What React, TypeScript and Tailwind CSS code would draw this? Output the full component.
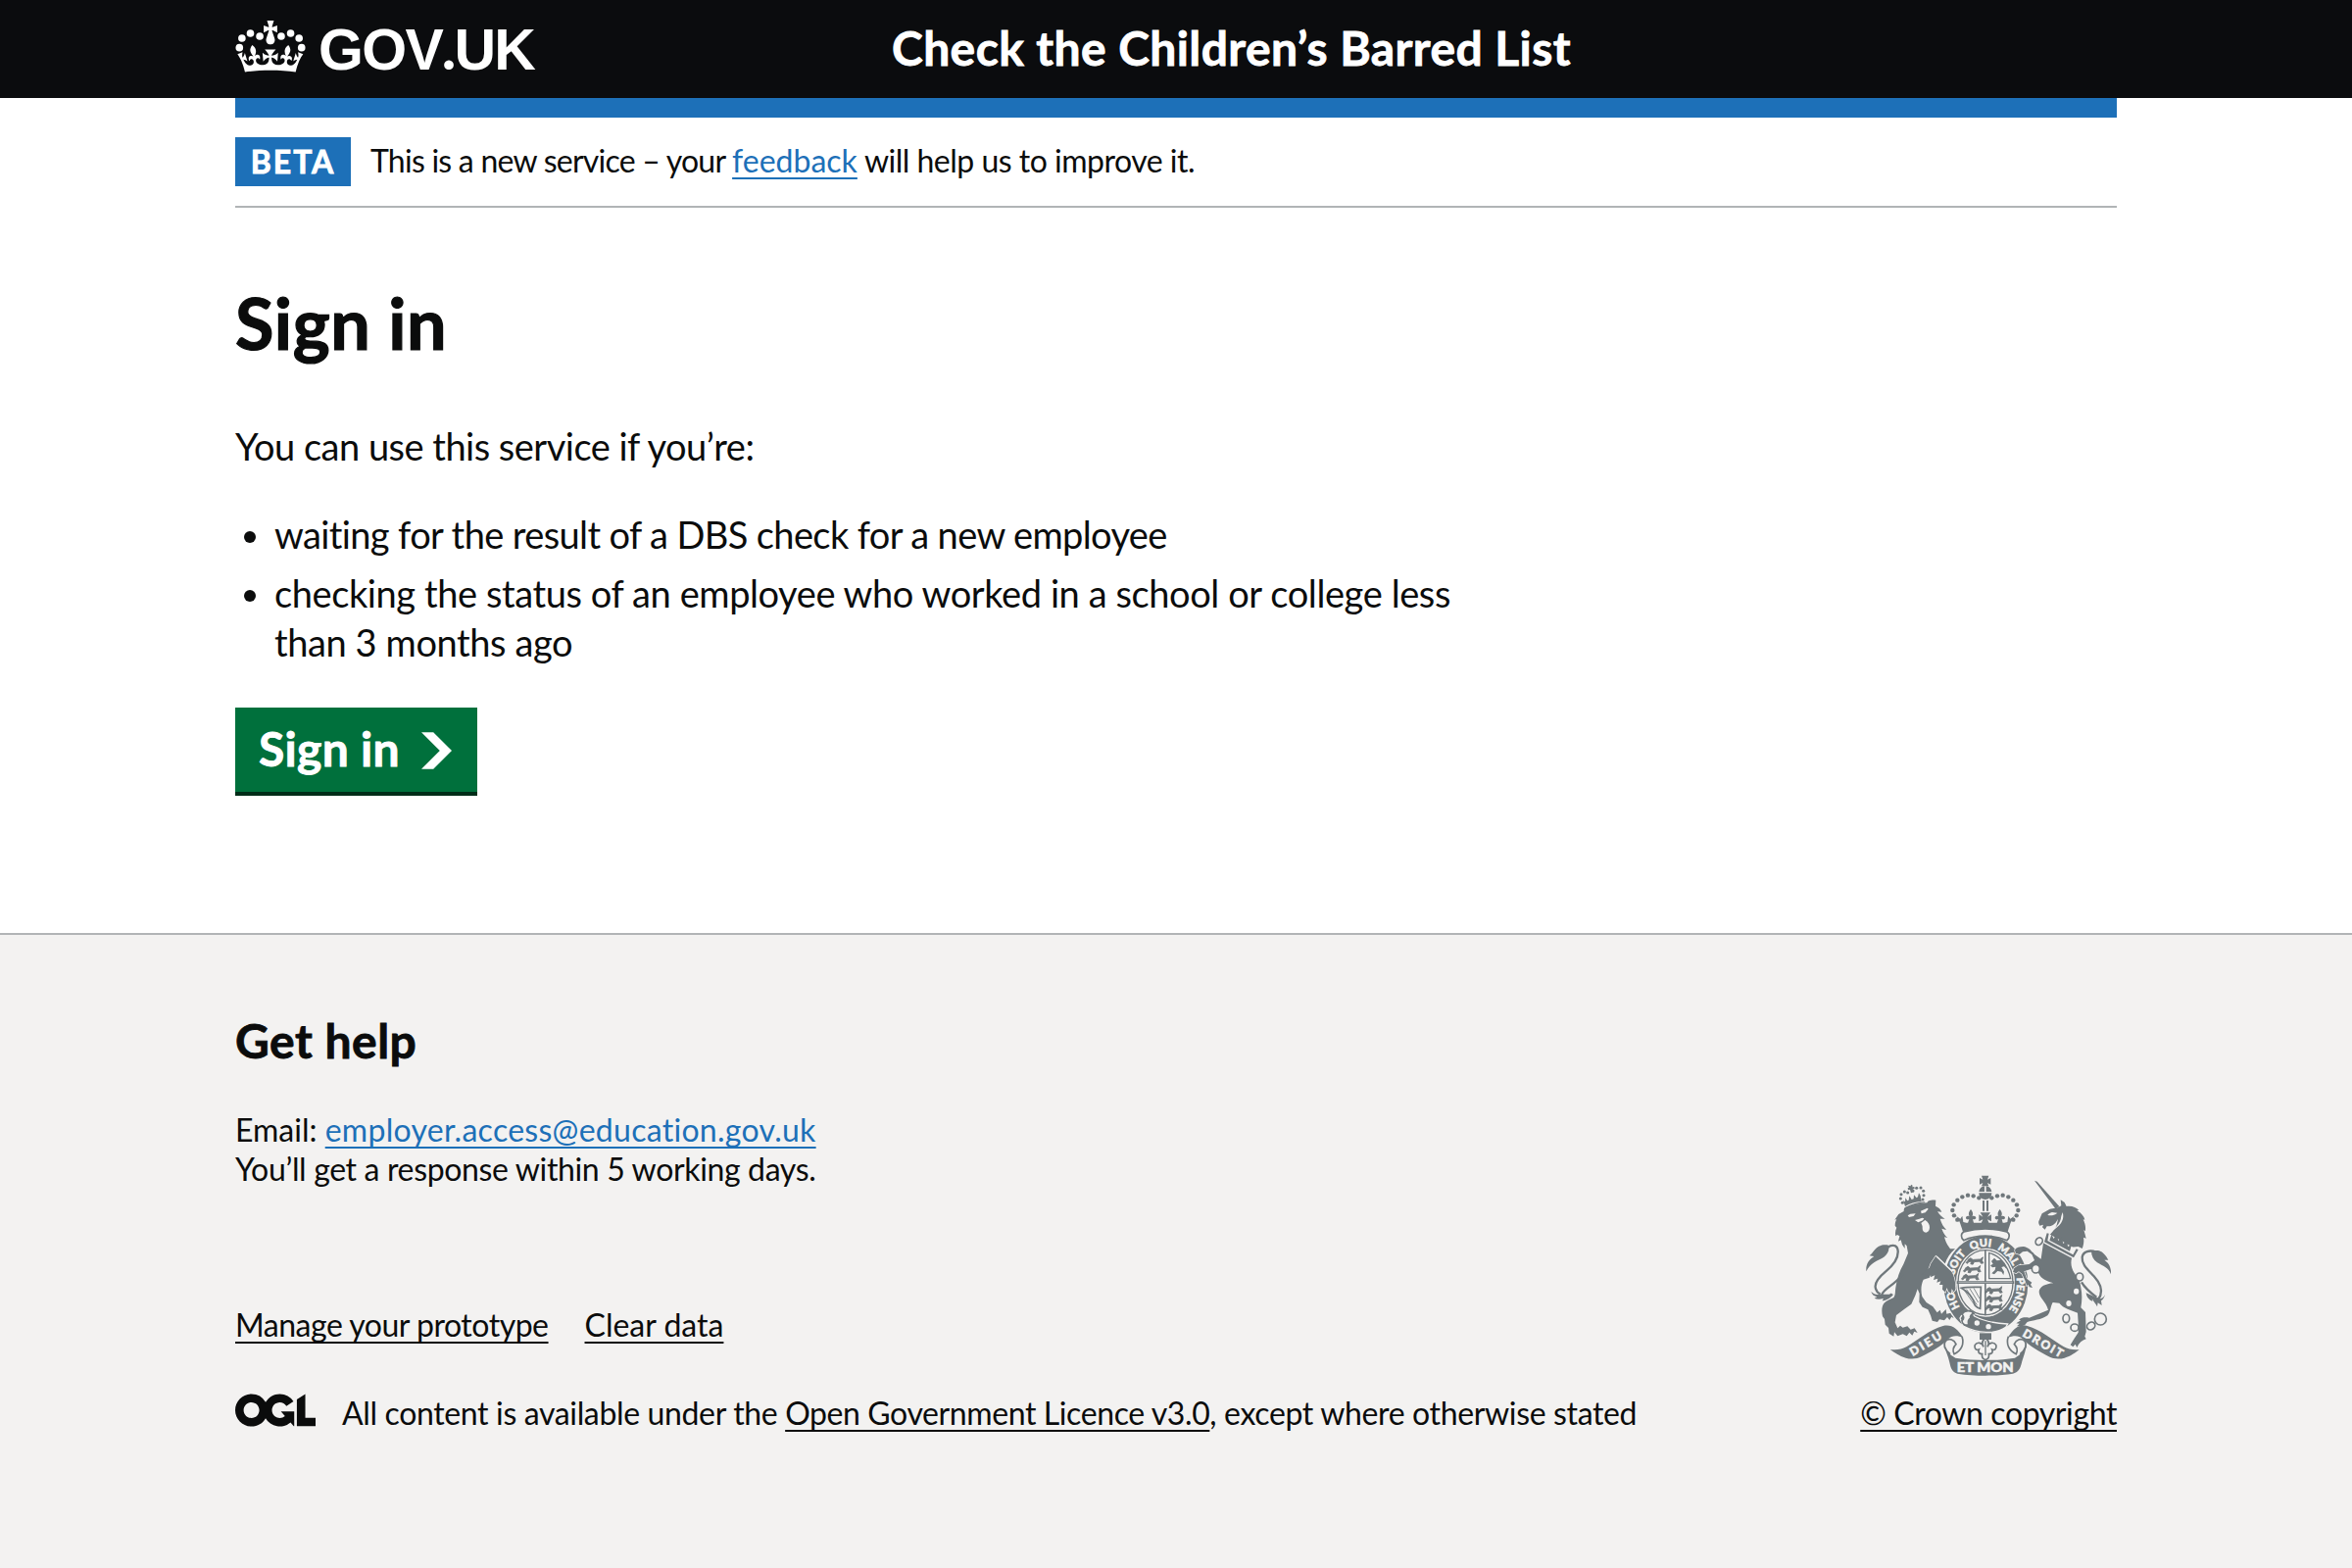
const crownBeads: [number, number][] = [
  [28.4, 23.7], [12.6, 32.9], [7.9, 50.6], [46, 29.2],
  [103.7, 23.7], [119.5, 32.9], [124.2, 50.6], [86.1, 29.2],
];

function CrownLogo() {
  return (
    <svg viewBox="0 0 132 97" className="h-[53px] w-[72px] fill-white" aria-hidden="true">
      {crownBeads.map(([x, y]) => (
        <circle key={`${x}-${y}`} cx={x} cy={y} r="7" />
      ))}
      <path d="M69.7 17.7l8.9 4.7V9.3l-8.9 2.8c-.2-.3-.5-.6-.9-.9L72.4 0H59.6l3.5 11.2c-.3.3-.6.5-.9.9l-8.8-2.8v13.1l8.8-4.7c.3.3.6.7.9.9l-5 15.4v.1c-.2.8-.4 1.6-.4 2.4 0 4.1 3.1 7.5 7 8.1h.2c.3 0 .7.1 1 .1.4 0 .7 0 1-.1h.2c4-.6 7.1-4.1 7.1-8.1 0-.8-.1-1.7-.4-2.4V34l-5.1-15.4c.4-.2.7-.6 1-.9z" />
      <path d="M66 92.8c16.9 0 32.8 1.1 47.1 3.2 4-16.9 8.9-26.7 14-33.5l-9.6-3.4c1 4.9 1.1 7.2 0 10.2-1.5-1.4-3-4.3-4.2-8.7L108.6 76c2.8-2 5-3.2 7.5-3.3-4.4 9.4-10 11.9-13.6 11.2-4.3-.8-6.3-4.6-5.6-7.9 1-4.7 5.7-5.9 8-.5 4.3-8.7-3-11.4-7.6-8.8 7.1-7.2 7.9-13.5 2.1-21.1-8 6.1-8.1 12.3-4.5 20.8-4.7-5.4-12.1-2.5-9.5 6.2 3.4-5.2 7.9-2 7.2 3.1-.6 4.3-6.4 7.8-13.5 7.2-10.3-.9-10.9-8-11.2-13.8 2.5-.5 7.1 1.8 11 7.3L80.2 60c-4.1 4.4-8 5.3-12.3 5.4 1.4-4.4 8-11.6 8-11.6H55.5s6.4 7.2 7.9 11.6c-4.2-.1-8-1-12.3-5.4l1.4 16.4c3.9-5.5 8.5-7.7 10.9-7.3-.3 5.8-.9 12.8-11.1 13.8-7.2.6-12.9-2.9-13.5-7.2-.7-5 3.8-8.3 7.1-3.1 2.7-8.7-4.6-11.6-9.4-6.2 3.7-8.5 3.6-14.7-4.6-20.8-5.8 7.6-5 13.9 2.2 21.1-4.7-2.6-11.9.1-7.7 8.8 2.3-5.5 7.1-4.2 8.1.5.7 3.3-1.3 7.1-5.7 7.9-3.5.7-9-1.8-13.5-11.2 2.5.1 4.7 1.3 7.5 3.3l-4.7-15.4c-1.2 4.4-2.7 7.2-4.3 8.7-1.1-3-.9-5.3 0-10.2l-9.5 3.4c5 6.9 9.9 16.7 14 33.5 14.8-2.1 30.8-3.2 47.7-3.2z" />
    </svg>
  );
}

function OglLogo() {
  return (
    <svg viewBox="0 0 483.2 195.7" className="mt-[-6px] h-[34px] w-[82px] shrink-0 fill-[#0b0c0c]" role="img" aria-label="OGL">
      <path d="M421.5 142.8V.1l-50.7 32.3v161.1h112.4v-50.7zm-122.3-9.6A47.12 47.12 0 0 1 221 97.8c0-26 21.1-47.1 47.1-47.1 16.7 0 31.4 8.7 39.7 21.8l42.7-27.2A97.63 97.63 0 0 0 268.1 0c-36.5 0-68.3 20.1-85.1 49.7A98 98 0 0 0 97.8 0C43.9 0 0 43.9 0 97.8s43.9 97.8 97.8 97.8c36.5 0 68.3-20.1 85.1-49.7a97.76 97.76 0 0 0 149.6 25.4l19.4 22.2h3v-87.8h-80l24.3 27.5zM97.8 145c-26 0-47.1-21.1-47.1-47.1s21.1-47.1 47.1-47.1 47.1 21.1 47.1 47.1S123.8 145 97.8 145" />
    </svg>
  );
}

const archBeads: [number, number][] = [
  [418, 128], [401, 122], [384, 120], [367, 125], [352, 135], [341, 149], [337, 166], [342, 182], [352, 195],
];

const lionBeads: [number, number][] = [
  [184, 143], [178, 130], [180, 117], [190, 109], [200, 112], [216, 106], [227, 98], [240, 97], [248, 107], [249, 120], [246, 133],
];

function Lion() {
  return (
    <g>
      {lionBeads.map(([x, y]) => (
        <circle key={`${x}-${y}`} cx={x} cy={y} r="4.6" />
      ))}
      <path d="M201 90l8 2 1-5 5 3-1 5 6-1 1 6-6 1 4 9-9 3-3-10-6 1-1-6 4-2z" />
      <path d="M186 135l6 5 1-12 6 9 4-2 2-13 7 11 6-2 1-12 8 9 4-3 3-12 5 8 3 18c-18 1-36 6-50 15z" />
      <path d="M192 157c18-10 40-16 60-17l1 3c-20 2-42 8-59 17z" />
      {/* head, mane and torso */}
      <path d="M172 178l16-9c0-5 1-9 3-11 22-9 44-14 68-15l3-5c10-4 18-4 24-3l-1 18c10 4 16 10 19 18l-13-1c6 9 14 17 23 22l-15 0c4 14 11 26 20 34l-15-4c4 12 10 21 18 28l-10-2c4 16 12 28 18 36l16 0c-16 12-26 28-32 46l-10 30-56 18c-8 16-8 36-4 52l13 18 20 13 13 18 9-8 4 12 14-14 2 14 18-4 4 18-7-5-6 10-7-9-9 10-15-3-6 8-16-4-5-16-8-18-17-8-10-15 1-26-6-14-7 20-12 26-22 16-24 18-4 22 8 18 8-8 8 6 14-4 10 10 12-4 9 14-10-4-6 12-9-9-8 11-12-6-16 6-10-12-2 13-14-9-2-17-10-10-2-17-6-8c-4-18-2-32 4-40 8-10 20-12 30-18 6-8 4-18 6-30 4-28 12-52 24-72l14-34-4-22-6-6 0 14-8-12-4-14-8 4 4-16-7-4-5 4c-2-10-1-18 3-26l-5-6c0-8 2-14 5-20l-6 2z" />
      <g className="fill-[#f3f2f1]">
        <path d="M200 182l8-5 16-1-6 8-14 3zM240 168l20-9 3 3-9 11-12 3zM222 196l14-4 8-3 6 2-4 6-14 6z" />
        <path d="M241 205l12-9c10 6 14 14 14 22 0 9-4 15-11 16-8 0-11-6-11-13 1-7-2-11-4-16z" />
      </g>
      {/* tail */}
      <path d="M186 360c-16 22-34 34-48 44-12 10-20 18-18 26 6 6 20 2 32-8" fill="none" stroke="#6f777b" strokeWidth="7" />
      <path d="M134 286c10-16 34-18 36 4 2 24-18 48-38 64-22 18-36 34-30 52 3 10 8 14 14 16" fill="none" stroke="#6f777b" strokeWidth="7" />
      <path d="M88 415c8 8 16 10 26 8l42 0c-10 14-26 20-34 20l4-8c-10 4-20 4-28 0l8-4c-10-2-16-8-18-16z" />
      <path d="M73 353c-2-22 8-36 24-46l-14-2c10-8 14-18 22-24 12-10 26-10 36-8 4 14-2 28-14 36-20 12-42 18-54 44z" />
    </g>
  );
}

/* foreleg resting on the garter */
function LionArm() {
  return (
    <g>
      <path d="M286 306l46 44c10 16 14 34 14 50 2 8-2 14-6 16l-5-10-2 14-9-5-4-12-5 14-9-9 1-14-10 0 4-11-12 4 3-12-13 4 4-14-14 6 4-14-12 0 10-28z" stroke="#f3f2f1" strokeWidth="4" className="[paint-order:stroke]" />
      <path d="M288 307l48 46" stroke="#f3f2f1" strokeWidth="4" />
      <path d="M268 366l-26-4 34-28 20 14-8 14z" />
    </g>
  );
}

function Unicorn() {
  return (
    <g>
      <path d="M588 75l8 3 68 76-11 8z" />
      <path d="M601 200l10-24 24-14 24-4 11-6-2-18 12 8 6 12c18-2 30 4 38 12l-6 1c14 8 22 18 24 28l-5-1c6 12 9 26 6 36l-4-4c3 10 5 18 7 26l-8-3c2 12 1 22-4 34l-12-6-22 2-40-20-32-10c10-12 22-22 28-38l4-18-8 12c-10 10-18 10-26 10l-6 10-8-7 3-8-11 3c-3-4-4-8-3-13z" />
      {/* collar */}
      <path d="M628 236l90 50-12 22-84-46z" className="fill-[#f3f2f1]" />
      <path d="M626 236l6 1-4 22 78 43 10-18 6 3-14 24-90-48z" />
      <path d="M634 258l6-18 7 13 8-14 6 20 10-11 5 20 12-10 2 19 12-6-6 20z" />
      <path d="M642 172c-6 2-12 6-14 8 8 3 20 2 30-6zM674 172c6 18-2 36-22 50-12 8-20 8-28 8 24-4 44-20 46-46z" className="fill-[#f3f2f1]" />
      {/* torso and legs */}
      <path
        d="M615 266l87 46c-4 18-1 32 8 46 10 14 18 22 20 44 4 20 4 40 0 62l14 14 2 60-4 14 4 8c-12 4-22 12-28 26l-5-10-7 8-8-6c8-14 16-26 24-38l0-30-2-30c-20-8-44-14-56-30l-20-2c-8 14-6 28-16 40-20 14-44 14-62 20l-8 10c-8 4-14 3-24 3l8-8-10-1 14-9-6-2c10-8 20-8 32-6l58-24c-6-26-28-36-28-56 2-16 20-24 44-26-20-6-38-14-44-28-10-14-18-16-28-14l-18 6 8 22 16 12-4 6 6 10-10-2-3-7-5 3-4-14-10-22-10-8-8 6-10-4 4-12 12-8 34-4 16-12-8-18-14-10-14 2-10 8-12-4-2-10c4-8 14-10 26-10 14 2 26 12 34 24l20 14z"
        stroke="#f3f2f1"
        strokeWidth="4"
        className="[paint-order:stroke]"
      />
      {[[716, 414], [693, 451], [585, 285]].map(([x, y]) => (
        <ellipse key={x} cx={x} cy={y} rx="8" ry="9" className="fill-[#f3f2f1]" />
      ))}
      {/* chain */}
      <g fill="#f3f2f1" stroke="#6f777b" strokeWidth="5">
        <ellipse cx="602" cy="261" rx="10" ry="12" transform="rotate(35 602 261)" />
        <ellipse cx="592" cy="345" rx="12" ry="13" />
        <ellipse cx="726" cy="370" rx="11" ry="12" />
        <ellipse cx="685" cy="497" rx="10" ry="13" />
        <ellipse cx="711" cy="525" rx="12" ry="11" />
        <ellipse cx="761" cy="520" rx="13" ry="11" transform="rotate(-35 761 520)" />
        <circle cx="790" cy="499" r="18" />
      </g>
      {/* tail */}
      <path d="M776 294c-18-8-40-2-42 16-2 22 18 38 36 58 20 22 26 40 20 58-2 8-8 12-14 14" fill="none" stroke="#6f777b" strokeWidth="7" />
      <path d="M732 386c12 20 30 34 46 46" fill="none" stroke="#6f777b" strokeWidth="7" />
      <path d="M822 362c2-22-8-36-20-44l12 0c-8-14-16-24-28-28-8-2-16 0-24 0 0 16 6 28 18 36 18 12 34 14 42 36z" />
      <path d="M804 424c-4 10-10 12-18 13l-40-18c2 14 10 22 20 26l-2-8c6 10 12 16 16 24l2-12 12 8-2-14c6-4 10-10 12-19z" />
    </g>
  );
}

function RoyalCrown() {
  return (
    <g>
      {archBeads.map(([x, y]) => (
        <g key={x}>
          <circle cx={x} cy={y} r="6.6" />
          <circle cx={875 - x} cy={y} r="6.6" />
        </g>
      ))}
      <path d="M426 60h22l-4 12 10-5v20l-10-5 4 10h-22l4-10-10 5v-20l10 5z" />
      <path d="M418 109c1-10 8-16 17-17v17zM440 92c9 1 16 7 17 17h-17zM418 113h39c0 12-8 20-19.500 20s-19.500-8-19.500-20z" />
      <path d="M429 136h6v32h-6zM441 136h6v32h-6z" />
      <path d="M422 173h31l-9 13 12-7v21l-12-6 6 14h-26l6-14-12 6v-21l12 7z" />
      <path d="M393 163c7 8 8 16 4 22 5-3 12-1 12 5-2 4-6 5-10 3l4 16h-20l5-16c-4 3-9 1-10-3 0-6 6-8 11-5-4-6-3-14 4-22zM482 163c7 8 8 16 4 22 5-3 12-1 12 5-2 4-6 5-10 3l4 16h-20l5-16c-4 3-9 1-10-3 0-6 6-8 11-5-4-6-3-14 4-22z" />
      <path d="M349 184l12 8 6-9 3 19 9 2h117l9-2 3-19 6 9 12-8c-12 18-14 30-20 48-44-10-94-10-137 0-6-18-8-30-20-48z" />
      <path d="M372 232c44-12 87-12 131 0 10 4 10 18 1 26-40-18-93-18-133 0-9-8-9-22 1-26z" fill="#f3f2f1" stroke="#6f777b" strokeWidth="5" />
    </g>
  );
}

/* a small walking beast, repeated in the England quarters */
const beast = "M0 4l6-4 5 4 16-1 6-5-2 8 3 6-5 1-3-5-12 1-3 6-5-1 2-6-6 1-3 4-3-2 4-5z";

function Shield() {
  return (
    <g>
      <ellipse cx="439" cy="392" rx="129" ry="149" stroke="#f3f2f1" strokeWidth="8" className="[paint-order:stroke]" />
      <ellipse cx="438" cy="387" rx="90" ry="105" className="fill-[#f3f2f1]" />
      <ellipse cx="438" cy="387" rx="84" ry="99" fill="none" stroke="#6f777b" strokeWidth="4" />
      <path d="M435 288h5v200h-5zM350 383h176v8h-176z" />
      <path d="M355 387h166" stroke="#f3f2f1" strokeWidth="1.500" />
      {[[392, 312], [384, 338], [378, 362], [450, 402], [450, 428], [450, 454]].map(([x, y]) => (
        <path key={`${x}-${y}`} d={beast} transform={`translate(${x - 8} ${y}) scale(1.400 1.300)`} stroke="#6f777b" strokeWidth="2" />
      ))}
      <path d="M449 297c30 6 56 34 66 78h-66z" fill="none" stroke="#6f777b" strokeWidth="4" />
      <path d="M456 322l9-10 8 8 14-2 10 10 6 18-8-8-8 2 8 14-2 10-6-10-12-2-10 10-8-3 10-10 2-10-10 2-6-6 8-5z" />
      <path d="M364 404c20-4 40-2 60-3l-2 66c-10-2-14-8-16-10-6-24-22-42-42-53z" fill="none" stroke="#6f777b" strokeWidth="5" />
      <path d="M380 408l32 48M390 406l26 42M402 404l18 32M374 412l32 46" stroke="#6f777b" strokeWidth="2.500" />
      {/* motto on the garter */}
      <path id="garter" d="M437 509A97 116 0 0 1 437 277A97 116 0 0 1 437 509" fill="none" />
      <g className="fill-[#f3f2f1] stroke-[#f3f2f1] stroke-[1.500px] font-['Lato',sans-serif] text-[33px] font-black">
        <text><textPath href="#garter" startOffset="94">HO</textPath></text>
        <text><textPath href="#garter" startOffset="196">SOIT</textPath></text>
        <text><textPath href="#garter" startOffset="291">QUI</textPath></text>
        <text><textPath href="#garter" startOffset="372">MAL</textPath></text>
        <text><textPath href="#garter" startOffset="446">Y</textPath></text>
        <text><textPath href="#garter" startOffset="482">PENSE</textPath></text>
      </g>
      {/* buckle and strap */}
      <path d="M360 496c8-14 20-22 36-20l8 14c26 14 62 22 102 24l-6 10c-30 22-86 20-130-4z" stroke="#f3f2f1" strokeWidth="4" />
      <path d="M366 484c8-12 28-14 36-2-8 2-12 8-10 14-6 4-8 12-6 20-10 4-20-2-20-12 6-6 6-14 0-20z" fill="#f3f2f1" stroke="#6f777b" strokeWidth="5" />
      <circle cx="412" cy="511" r="8" className="fill-[#f3f2f1]" />
      <circle cx="447" cy="522" r="8" className="fill-[#f3f2f1]" />
    </g>
  );
}

function Ribbon() {
  return (
    <g>
      <path d="M420 542h36v20h-36z" />
      <path d="M438 556c10 8 12 18 6 28 4-14 20-16 26-6 3 10-3 18-12 14 4 10-2 14-10 14 2 10-3 16-10 18-7-2-12-8-10-18-8 0-14-4-10-14-9 4-15-4-12-14 6-10 22-8 26 6-6-10-4-20 6-28z" fill="#f3f2f1" stroke="#6f777b" strokeWidth="5" />
      <path d="M438 566v44" stroke="#6f777b" strokeWidth="4" />
      <path d="M146 592c20 2 36 0 50-8 36-22 70-52 112-64 26-6 44 8 62 36-20-8-36-6-46 4-20 22-54 40-82 54-14 8-34 8-48 4-20-6-34-16-48-26z" />
      <path d="M728 592c-20 2-36 0-50-8-36-22-70-52-112-64-26-6-42 8-60 36 20-8 36-6 46 4 20 22 54 40 80 54 14 8 34 8 48 4 20-6 32-16 46-26z" />
      <path d="M366 552c8 24-2 44-24 54-6-12-4-20 6-30-6-14-20-20-32-10-10 14 2 30 14 40" fill="#f3f2f1" stroke="#6f777b" strokeWidth="5" />
      <path d="M508 552c-8 24 2 44 24 54 6-12 4-20-6-30 6-14 20-20 32-10 10 14-2 30-14 40" fill="#f3f2f1" stroke="#6f777b" strokeWidth="5" />
      <path d="M312 574c2 20 16 34 34 44 58 9 124 9 182 0 18-10 30-24 34-44 2 16-6 34-12 54-6 26-12 34-28 38-54 8-116 8-170 0-14-4-20-14-24-34-4-22-14-36-16-58z" />
      <g className="fill-[#f3f2f1] stroke-[#f3f2f1] stroke-[1.500px] font-['Lato',sans-serif] font-black">
        <text x="350" y="660" textLength="174" lengthAdjust="spacingAndGlyphs" className="text-[42px]">ET MON</text>
        <text transform="translate(215 613) rotate(-31)" textLength="108" className="text-[36px]">DIEU</text>
        <text transform="translate(549 550) rotate(30)" textLength="136" className="text-[36px]">DROIT</text>
      </g>
    </g>
  );
}

function RoyalArms() {
  return (
    <svg viewBox="72 58 750 615" className="mb-[18px] h-[205px] w-[250px] fill-[#6f777b]" aria-hidden="true">
      <Lion />
      <Shield />
      <LionArm />
      <Unicorn />
      <RoyalCrown />
      <Ribbon />
    </svg>
  );
}

const link = "underline decoration-2 underline-offset-[5px] [text-decoration-skip-ink:none]";
const heavy = "font-bold [-webkit-text-stroke:0.8px_currentColor]";

export default function App() {
  return (
    <div className="flex h-[1600px] w-[2400px] flex-col overflow-hidden bg-white font-['Lato',sans-serif] text-[32px]/[40px] text-[#0b0c0c] antialiased [font-variant-ligatures:none]">
      <header className="h-[100px] bg-[#0b0c0e] text-white">
        <div className="mx-auto flex h-full w-[1920px] items-start">
          <a className="flex w-[670px] pt-[21px]">
            <CrownLogo />
            <span className="ml-[13px] mt-[-2px] font-['Liberation_Sans',sans-serif] text-[59px]/[60px] font-bold tracking-[-1.700px]">
              GOV<span className="font-['Lato',sans-serif] font-black">.</span>UK
            </span>
          </a>
          <a className={`${heavy} pt-[24px] text-[48px]/[50px] tracking-[0.400px]`}>Check the Children’s Barred List</a>
        </div>
      </header>

      <div className="mx-auto w-[1920px] border-t-[20px] border-[#1d70b8]">
        <div className="flex h-[92px] items-center border-b-2 border-[#b1b4b6]">
          <strong className="flex h-[50px] w-[118px] items-center justify-center bg-[#1d70b8] font-bold tracking-[2px] text-white [-webkit-text-stroke:0.8px_currentColor]">BETA</strong>
          <p className="ml-[20px] whitespace-pre pb-[3px] tracking-[-0.500px]">
            <span className="tracking-[-0.760px]">This is a new service – your </span>
            <a className={`${link} tracking-normal text-[#1d70b8]`}>feedback</a>
            {" will help us to improve it."}
          </p>
        </div>
      </div>

      <main className="mx-auto h-[740px] w-[1920px] pt-[80px]">
        <h1 className="text-[72px]/[75px] font-bold tracking-[0.500px] [-webkit-text-stroke:1.200px_currentColor]">Sign in</h1>
        <p className="mt-[63px] text-[38px]/[50px] tracking-[-0.510px]">You can use this service if you’re:</p>
        <ul className="mt-[40px] flex w-[1260px] flex-col gap-[10px] text-[38px]/[50px]">
          <li className="flex tracking-[-0.620px]">
            <i className="ml-[9px] mr-[19px] mt-[22px] size-[12px] shrink-0 rounded-full bg-[#0b0c0c]" />
            waiting for the result of a DBS check for a new employee
          </li>
          <li className="flex tracking-[-0.410px]">
            <i className="ml-[9px] mr-[19px] mt-[22px] size-[12px] shrink-0 rounded-full bg-[#0b0c0c]" />
            <span>checking the status of an employee who worked in a school or college less<br />than 3 months ago</span>
          </li>
        </ul>
        <button className={`${heavy} mt-[42px] flex h-[86px] w-[247px] items-center bg-[#00703c] pl-[24px] text-[48px]/[48px] tracking-[0.300px] text-white shadow-[0_4px_0_#002d18]`}>
          <span className="w-[166px] pb-[3px] text-left">Sign in</span>
          <svg viewBox="0 0 33 40" className="mt-px h-[38px] w-[31px] fill-white" aria-hidden="true">
            <path d="M0 0h13l20 20-20 20H0l20-20z" />
          </svg>
        </button>
      </main>

      <footer className="flex-1 border-t-2 border-[#b1b4b6] bg-[#f3f2f1]">
        <div className="mx-auto flex w-[1920px] items-end justify-between pt-[83px]">
          <div>
            <h2 className={`${heavy} text-[48px]/[50px] tracking-[0.500px]`}>Get help</h2>
            <p className="mt-[46px] tracking-[-0.350px]">
              <span className="tracking-normal">Email: </span>
              <a className={`${link} tracking-[0.280px] text-[#1d70b8]`}>employer.access@education.gov.uk</a>
              <br />
              You’ll get a response within 5 working days.
            </p>
            <div className="mt-[119px] flex gap-[37px] tracking-[-0.480px]">
              <a className={link}>Manage your prototype</a>
              <a className={`${link} tracking-normal`}>Clear data</a>
            </div>
            <div className="mt-[50px] flex items-center">
              <OglLogo />
              <p className="ml-[27px] tracking-[-0.350px]">
                All content is available under the <a className={`${link} tracking-[-0.400px]`}>Open Government Licence v3.0</a>, except where otherwise stated
              </p>
            </div>
          </div>
          <div className="flex flex-col items-center">
            <RoyalArms />
            <a className={`${link} tracking-[-0.390px]`}>© Crown copyright</a>
          </div>
        </div>
      </footer>
    </div>
  );
}
